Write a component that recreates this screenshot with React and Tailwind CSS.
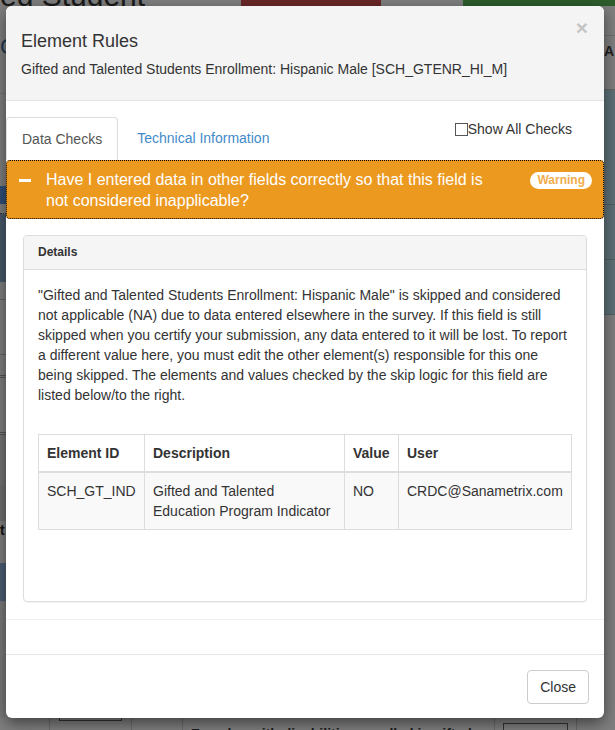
import React from 'react';

const font = "font-['Liberation_Sans',Arial,Helvetica,sans-serif]";

const rows = [
  { id: 'SCH_GT_IND', desc: 'Gifted and Talented Education Program Indicator', value: 'NO', user: 'CRDC@Sanametrix.com' },
];

const PageBehind = () => (
  <div className="flex flex-col h-full bg-[#7f7f7f]">
    <div className="flex h-[6px] overflow-visible">
      <div className="w-[241px] relative">
        <span className="block -mt-[19px] text-[30px] leading-[30px] text-[#1a1a1a] whitespace-nowrap">ed Student</span>
      </div>
      <div className="w-[140px] bg-[#6b2727]" />
      <div className="w-[82px]" />
      <div className="flex-1 bg-[#2d5d2d]" />
    </div>
    <div className="flex flex-1">
      <div className="w-[6px] flex flex-col">
        <div className="h-[24px]" />
        <div className="h-[34px] text-[#1f3552] text-[22px] leading-[34px] overflow-hidden">C</div>
        <div className="h-[30px] border-b border-[#747474]" />
        <div className="h-[92px]" />
        <div className="h-[18px] bg-[#2f4f78]" />
        <div className="h-[10px] border-b border-dotted border-[#333]" />
        <div className="h-[68px] bg-[#48586a]" />
        <div className="h-[18px] border-b border-[#666]" />
        <div className="h-[55px] border-b border-[#666]" />
        <div className="h-[23px] border-b-[3px] border-double border-[#555]" />
        <div className="h-[57px] border-b-[3px] border-double border-[#555]" />
        <div className="h-[50px] bg-[#747474]" />
        <div className="h-[36px] bg-[#707070]" />
        <div className="h-[18px] text-[#111] font-bold text-[14px] leading-[18px] overflow-hidden">t</div>
        <div className="h-[24px]" />
        <div className="h-[38px] bg-[#4b5e74]" />
        <div className="flex-1 bg-[#7a7a7a]" />
      </div>
      <div className="flex-1" />
      <div className="w-[11px] flex flex-col">
        <div className="h-[30px] border-b border-[#6f6f6f]" />
        <div className="h-[30px] text-[#222] text-[14px] font-bold leading-[30px]">A</div>
        <div className="h-[24px] border-b border-[#666]" />
        <div className="h-[115px] bg-[#5e7076] border-b border-[#4f5f64]" />
        <div className="h-[55px] bg-[#5e7076] border-b border-[#4f5f64]" />
        <div className="h-[55px] bg-[#5e7076] border-b border-[#4f5f64]" />
        <div className="flex-1" />
      </div>
    </div>
    <div className="flex h-[12px] text-[14px] font-bold text-[#1c1c1c]">
      <div className="w-[49px]" />
      <div className="w-[82px] border-l border-[#6a6a6a] px-[9px]">
        <div className="h-[3px] border border-t-0 border-[#333]" />
      </div>
      <div className="w-[51px] border-l border-[#6a6a6a]" />
      <div className="w-[312px] border-l border-[#6a6a6a] pl-[8px] overflow-hidden">
        <span className="block mt-[8px] whitespace-nowrap leading-[16px]">Females with disabilities enrolled in gifted and</span>
      </div>
      <div className="w-[82px] border-l border-[#6a6a6a] px-[8px] pt-[5px]">
        <div className="h-[10px] border border-b-0 border-[#333]" />
      </div>
      <div className="flex-1 border-l border-[#6a6a6a]" />
    </div>
  </div>
);

export default function App() {
  return (
    <div className={`relative w-[615px] h-[730px] overflow-hidden ${font}`}>
      <PageBehind />

      <div className="absolute left-[6px] top-[6px] w-[598px] h-[712px] bg-white rounded-[6px] shadow-[0_5px_15px_rgba(0,0,0,0.5)] flex flex-col text-[#333]">
        {/* header */}
        <div className="h-[95px] shrink-0 bg-[#f4f4f4] border-b border-[#e5e5e5] rounded-t-[6px] pl-[15px] pr-[16px] pt-[25px] flex justify-between items-start">
          <div>
            <h4 className="text-[18px] leading-[20px] text-[#333]">Element Rules</h4>
            <p className="mt-[8px] text-[14px] leading-[20px] text-[#333]">Gifted and Talented Students Enrollment: Hispanic Male [SCH_GTENR_HI_M]</p>
          </div>
          <span className="-mt-[14px] text-[21px] font-bold leading-[21px] text-[#c4c4c4]">×</span>
        </div>

        {/* tabs */}
        <div className="flex items-end h-[59px] shrink-0 pt-[16px]">
          <div className="h-[43px] border border-b-0 border-[#ddd] rounded-t-[4px] px-[15px] pt-[11px] text-[14px] leading-[20px] text-[#555]">Data Checks</div>
          <div className="h-[43px] ml-[4px] px-[15px] pt-[11px] text-[14px] leading-[20px] text-[#428bca]">Technical Information</div>
          <div className="flex-1" />
          <label className="self-start flex items-center mr-[32px] mt-[4px] text-[14px] leading-[16px] text-[#333]">
            <span className="w-[13px] h-[13px] border border-[#555] bg-white" />
            Show All Checks
          </label>
        </div>

        {/* warning bar */}
        <div className="h-[59px] shrink-0 bg-[#ec991f] border border-dotted border-black rounded-[4px] flex items-start text-white">
          <span className="w-[12px] h-[3px] bg-white ml-[12px] mt-[18px]" />
          <p className="ml-[15px] mt-[8px] w-[460px] text-[16px] leading-[21px]">Have I entered data in other fields correctly so that this field is not considered inapplicable?</p>
          <div className="flex-1" />
          <span className="mt-[11px] mr-[11px] h-[17px] px-[7px] rounded-full bg-white text-[#f0ad4e] text-[12px] font-bold leading-[17px]">Warning</span>
        </div>

        {/* details panel */}
        <div className="mx-[17px] mt-[16px] h-[367px] shrink-0 border border-[#ddd] rounded-[4px] shadow-[0_1px_1px_rgba(0,0,0,0.05)] flex flex-col">
          <div className="h-[34px] bg-[#f5f5f5] border-b border-[#ddd] rounded-t-[3px] px-[14px] text-[12px] font-bold leading-[33px]">Details</div>
          <div className="px-[14px] pt-[15px]">
            <p className="text-[14px] leading-[20px]">
              "Gifted and Talented Students Enrollment: Hispanic Male" is skipped and considered not applicable (NA) due to data entered elsewhere in the survey. If this field is still skipped when you certify your submission, any data entered to it will be lost. To report a different value here, you must edit the other element(s) responsible for this one being skipped. The elements and values checked by the skip logic for this field are listed below/to the right.
            </p>
            <table className="mt-[29px] w-[533px] table-fixed border-collapse text-[14px] leading-[20px]">
              <colgroup>
                <col className="w-[106px]" />
                <col className="w-[200px]" />
                <col className="w-[54px]" />
                <col className="w-[173px]" />
              </colgroup>
              <thead>
                <tr>
                  <th className="text-left font-bold p-[8px] border border-[#ddd] border-b-2">Element ID</th>
                  <th className="text-left font-bold p-[8px] border border-[#ddd] border-b-2">Description</th>
                  <th className="text-left font-bold p-[8px] border border-[#ddd] border-b-2">Value</th>
                  <th className="text-left font-bold p-[8px] border border-[#ddd] border-b-2">User</th>
                </tr>
              </thead>
              <tbody>
                {rows.map((r) => (
                  <tr key={r.id} className="bg-[#f9f9f9] align-top">
                    <td className="p-[8px] border border-[#ddd]">{r.id}</td>
                    <td className="p-[8px] border border-[#ddd]">{r.desc}</td>
                    <td className="p-[8px] border border-[#ddd]">{r.value}</td>
                    <td className="p-[8px] border border-[#ddd]">{r.user}</td>
                  </tr>
                ))}
              </tbody>
            </table>
          </div>
        </div>

        <div className="mt-[17px] h-[35px] shrink-0 border-t border-[#f0f0f0]" />

        {/* footer */}
        <div className="flex-1 border-t border-[#e5e5e5] px-[15px] pt-[15px] flex justify-end items-start">
          <button className="h-[34px] px-[12px] border border-[#ccc] rounded-[4px] bg-white text-[14px] text-[#333]">Close</button>
        </div>
      </div>
    </div>
  );
}
